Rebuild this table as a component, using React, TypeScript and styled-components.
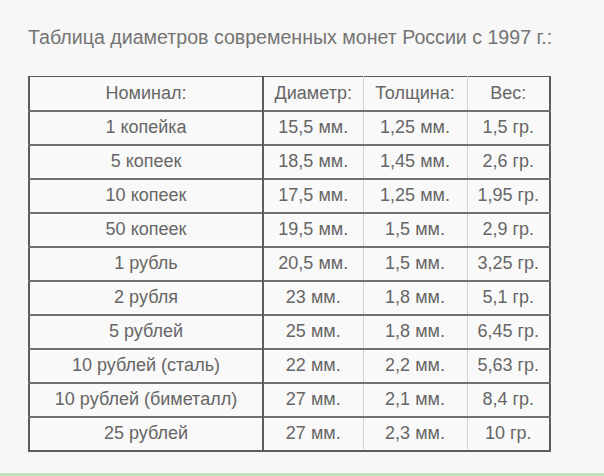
import React from "react";
import styled, { createGlobalStyle } from "styled-components";

const Global = createGlobalStyle`
  html, body { margin: 0; padding: 0; background: #f7f7f7; }
  body { font-family: "Liberation Sans", Arial, sans-serif; }
`;

const Page = styled.div`
  box-sizing: border-box;
  height: 476px;
  padding: 25px 0 0 28px;
  background: #f7f7f7;
  border-bottom: 3px solid #bfe0bb;
`;

const Title = styled.h1`
  margin: 0 0 27px 0;
  font-size: 19.6px;
  line-height: 24px;
  font-weight: normal;
  color: #747474;
  white-space: nowrap;
`;

const Table = styled.table`
  border-collapse: collapse;
  table-layout: fixed;
  width: 521px;
  background: #f9f9f9;
  border-left: 2px solid #5c5c5c;
  border-right: 2px solid #5c5c5c;
  border-top: 1px solid #5c5c5c;
  border-bottom: 2px solid #5c5c5c;
`;

const Col = styled.col<{ $w: number }>`
  width: ${(p) => p.$w}px;
`;

const Row = styled.tr`
  height: 34px;
  border-bottom: 2px solid #707070;
  &:last-child { border-bottom: none; }
`;

const Cell = styled.td<{ $first?: boolean }>`
  padding: 0;
  text-align: center;
  font-size: 18px;
  color: #666666;
  white-space: nowrap;
  border-right: ${(p) => (p.$first ? "2px solid #5c5c5c" : "1px solid #d2d2d2")};
  &:last-child { border-right: none; }
`;

const widths = [234, 100, 104, 83];

const data: string[][] = [
  ["Номинал:", "Диаметр:", "Толщина:", "Вес:"],
  ["1 копейка", "15,5 мм.", "1,25 мм.", "1,5 гр."],
  ["5 копеек", "18,5 мм.", "1,45 мм.", "2,6 гр."],
  ["10 копеек", "17,5 мм.", "1,25 мм.", "1,95 гр."],
  ["50 копеек", "19,5 мм.", "1,5 мм.", "2,9 гр."],
  ["1 рубль", "20,5 мм.", "1,5 мм.", "3,25 гр."],
  ["2 рубля", "23 мм.", "1,8 мм.", "5,1 гр."],
  ["5 рублей", "25 мм.", "1,8 мм.", "6,45 гр."],
  ["10 рублей (сталь)", "22 мм.", "2,2 мм.", "5,63 гр."],
  ["10 рублей (биметалл)", "27 мм.", "2,1 мм.", "8,4 гр."],
  ["25 рублей", "27 мм.", "2,3 мм.", "10 гр."],
];

export default function App() {
  return (
    <>
      <Global />
      <Page>
        <Title>Таблица диаметров современных монет России с 1997 г.:</Title>
        <Table>
          <colgroup>
            {widths.map((w, i) => (
              <Col key={i} $w={w} />
            ))}
          </colgroup>
          <tbody>
            {data.map((row, i) => (
              <Row key={i}>
                {row.map((c, j) => (
                  <Cell key={j} $first={j === 0}>
                    {c}
                  </Cell>
                ))}
              </Row>
            ))}
          </tbody>
        </Table>
      </Page>
    </>
  );
}
